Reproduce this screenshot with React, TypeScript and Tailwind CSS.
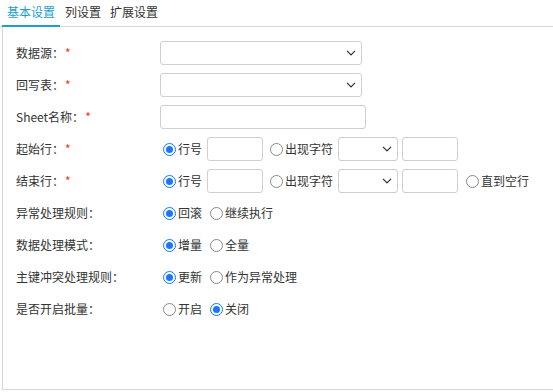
import React from "react";

const Chevron = () => (
  <svg width="10" height="6" viewBox="0 0 10 6" className="absolute right-[5px] top-1/2 -translate-y-1/2">
    <path d="M1 0.8 L5 4.8 L9 0.8" fill="none" stroke="#333" strokeWidth="1.2" />
  </svg>
);

const Select = ({ w }: { w: string }) => (
  <div className={`relative h-[24px] ${w} rounded-[3px] border border-[#cfcfcf] bg-white`}>
    <Chevron />
  </div>
);

const Input = ({ w }: { w: string }) => (
  <div className={`h-[24px] ${w} rounded-[3px] border border-[#cfcfcf] bg-white`} />
);

const Radio = ({ checked, label }: { checked?: boolean; label: string }) => (
  <div className="flex items-center">
    {checked ? (
      <span className="ml-[3px] flex h-[13px] w-[13px] items-center justify-center rounded-full border-[1.5px] border-[#1677ff] bg-white">
        <span className="h-[7px] w-[7px] rounded-full bg-[#1677ff]" />
      </span>
    ) : (
      <span className="ml-[3px] h-[13px] w-[13px] rounded-full border border-[#8a8a8a] bg-white" />
    )}
    <span className="ml-[2px]">{label}</span>
  </div>
);

const Row = ({ label, req, children }: { label: string; req?: boolean; children: React.ReactNode }) => (
  <div className="flex h-8 items-center">
    <div className="w-[144px] shrink-0">
      {label}
      {req && <span className="ml-[1px] text-[#ff2d2d]">*</span>}
    </div>
    <div className="flex items-center">{children}</div>
  </div>
);

export default function App() {
  return (
    <div
      className="h-[392px] w-[553px] bg-white text-[12px] text-[#333]"
      style={{ fontFamily: '"Noto Sans CJK SC", "Noto Sans", sans-serif' }}
    >
      <div className="flex h-[27px] border-b border-[#d8d8d8] pl-[2px]">
        <div className="-mb-px flex items-center border-b-2 border-[#1a9fd0] px-[5px] pb-[2px] text-[#1a9fd0]">基本设置</div>
        <div className="flex items-center px-[5px] pb-[2px]">列设置</div>
        <div className="flex items-center px-[4px] pb-[2px]">扩展设置</div>
      </div>
      <div className="ml-[2px] h-[363px] border-b border-l border-[#d8d8d8] pl-[13px] pt-[10px]">
        <Row label="数据源：" req>
          <Select w="w-[202px]" />
        </Row>
        <Row label="回写表：" req>
          <Select w="w-[202px]" />
        </Row>
        <Row label="Sheet名称：" req>
          <Input w="w-[206px]" />
        </Row>
        <Row label="起始行：" req>
          <Radio checked label="行号" />
          <div className="ml-[5px]"><Input w="w-[56px]" /></div>
          <div className="ml-[4px]"><Radio label="出现字符" /></div>
          <div className="ml-[5px]"><Select w="w-[60px]" /></div>
          <div className="ml-[4px]"><Input w="w-[56px]" /></div>
        </Row>
        <Row label="结束行：" req>
          <Radio checked label="行号" />
          <div className="ml-[5px]"><Input w="w-[56px]" /></div>
          <div className="ml-[4px]"><Radio label="出现字符" /></div>
          <div className="ml-[5px]"><Select w="w-[60px]" /></div>
          <div className="ml-[4px]"><Input w="w-[56px]" /></div>
          <div className="ml-[5px]"><Radio label="直到空行" /></div>
        </Row>
        <Row label="异常处理规则：">
          <Radio checked label="回滚" />
          <div className="ml-[5px]"><Radio label="继续执行" /></div>
        </Row>
        <Row label="数据处理模式：">
          <Radio checked label="增量" />
          <div className="ml-[5px]"><Radio label="全量" /></div>
        </Row>
        <Row label="主键冲突处理规则：">
          <Radio checked label="更新" />
          <div className="ml-[5px]"><Radio label="作为异常处理" /></div>
        </Row>
        <Row label="是否开启批量：">
          <Radio label="开启" />
          <div className="ml-[5px]"><Radio checked label="关闭" /></div>
        </Row>
      </div>
    </div>
  );
}
